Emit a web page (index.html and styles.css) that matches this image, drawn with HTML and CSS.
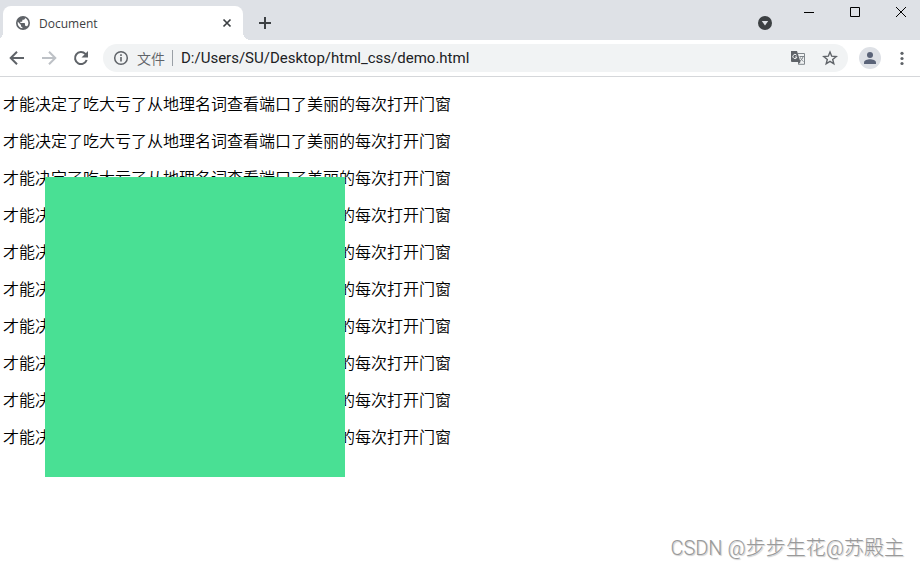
FILE: index.html
```html
<!DOCTYPE html>
<html lang="zh-CN">
<head>
  <meta charset="UTF-8" />
  <title>Document</title>
  <link rel="stylesheet" href="styles.css">
</head>
<body>

  <header class="browser">
    <div class="tab-bar">
      <div class="tab">
        <svg width="16" height="16" viewBox="0 0 24 24">
          <path d="M12 1.500a10.500 10.500 0 1 0 0 21 10.500 10.500 0 0 0 0-21zm-1 18.430c-3.950-.490-7-3.850-7-7.930 0-.620.080-1.210.210-1.790L9 15v1c0 1.100.900 2 2 2v1.930zm6.900-2.540c-.260-.810-1-1.390-1.900-1.390h-1v-3c0-.550-.450-1-1-1H8v-2h2c.550 0 1-.450 1-1V7h2c1.100 0 2-.900 2-2v-.410c2.930 1.190 5 4.060 5 7.410 0 2.080-.800 3.970-2.100 5.390z" fill="#5f6368" />
        </svg>
        <span class="tab-title">Document</span>
        <button class="icon-btn" aria-label="Close tab">
          <svg width="16" height="16" viewBox="0 0 16 16"><path d="M4.500 4.500l7 7M11.500 4.500l-7 7" stroke="#3c4043" stroke-width="1.700" /></svg>
        </button>
      </div>
      <button class="icon-btn new-tab" aria-label="New tab">
        <svg width="16" height="16" viewBox="0 0 16 16"><path d="M8 2v12M2 8h12" stroke="#3c4043" stroke-width="2" /></svg>
      </button>
      <button class="icon-btn tab-search" aria-label="Search tabs">
        <svg width="16" height="16" viewBox="0 0 16 16">
          <circle cx="8" cy="8" r="7" fill="#3c4043" />
          <path d="M4.800 6h6.400L8 10.500z" fill="#dee1e6" />
        </svg>
      </button>
      <div class="window-buttons">
        <button class="icon-btn" aria-label="Minimize">
          <svg width="12" height="12" viewBox="0 0 12 12"><path d="M1 6.500h10" stroke="#000" /></svg>
        </button>
        <button class="icon-btn" aria-label="Maximize">
          <svg width="12" height="12" viewBox="0 0 12 12"><path d="M1.500 1.500h9v9h-9z" fill="none" stroke="#000" /></svg>
        </button>
        <button class="icon-btn" aria-label="Close">
          <svg width="12" height="12" viewBox="0 0 12 12"><path d="M1 1l10 10M11 1L1 11" stroke="#000" /></svg>
        </button>
      </div>
    </div>

    <div class="toolbar">
      <button class="icon-btn" aria-label="Back">
        <svg width="16" height="16" viewBox="0 0 16 16"><path d="M15 8H2M8 1.700L1.700 8 8 14.300" fill="none" stroke="#5f6368" stroke-width="2" /></svg>
      </button>
      <button class="icon-btn" aria-label="Forward">
        <svg width="16" height="16" viewBox="0 0 16 16"><path d="M1 8h13M8 1.700L14.300 8 8 14.300" fill="none" stroke="#bdc1c6" stroke-width="2" /></svg>
      </button>
      <button class="icon-btn" aria-label="Reload">
        <svg width="16" height="16" viewBox="0 0 16 16">
          <path d="M13.700 10A6 6 0 1 1 12.400 3.900L13.500 5" fill="none" stroke="#5f6368" stroke-width="2" />
          <path d="M15 1v6.500H8.500z" fill="#5f6368" />
        </svg>
      </button>

      <div class="address-bar">
        <svg width="16" height="16" viewBox="0 0 16 16">
          <circle cx="8" cy="8" r="6.300" fill="none" stroke="#5f6368" stroke-width="1.500" />
          <path d="M8 7v4.500M8 4.300v1.600" stroke="#5f6368" stroke-width="1.600" />
        </svg>
        <label class="scheme" for="url">文件</label>
        <input type="text" id="url" value="D:/Users/SU/Desktop/html_css/demo.html" />
        <button class="icon-btn" aria-label="Translate">
          <svg width="16" height="16" viewBox="0 0 16 16">
            <path d="M7.500 3.500h7v10.800H8.300" fill="none" stroke="#80868b" />
            <path d="M1 1h6l3.500 11H2a1 1 0 0 1-1-1z" fill="#5f6368" />
            <path d="M6.600 5.200A2.100 2.100 0 1 0 7 7H5" fill="none" stroke="#f1f3f4" />
            <path d="M8 12l.300 2.500 2.200-2.500z" fill="#5f6368" />
            <path d="M9.500 6.500H14M13 6.500c-.300 2-1.500 3.500-3 4.500M10.500 7.500c.500 1.700 1.500 3 3 4" fill="none" stroke="#80868b" />
          </svg>
        </button>
        <button class="icon-btn" aria-label="Bookmark">
          <svg width="16" height="16" viewBox="0 0 16 16"><path d="M8 2l1.700 4.200 4.500.300-3.500 2.900 1.100 4.400L8 11.400l-3.800 2.400 1.100-4.400-3.500-2.900 4.500-.300z" fill="none" stroke="#5f6368" stroke-width="1.400" /></svg>
        </button>
      </div>

      <button class="icon-btn avatar" aria-label="Profile">
        <svg width="16" height="16" viewBox="0 0 16 16">
          <circle cx="8" cy="5" r="3" fill="#5a6378" />
          <path d="M2 14v-1.600C2 10.200 5.500 9.200 8 9.200s6 1 6 3.200V14z" fill="#5a6378" />
        </svg>
      </button>
      <button class="icon-btn menu" aria-label="Menu">
        <svg width="16" height="16" viewBox="0 0 16 16" fill="#5f6368"><circle cx="8" cy="3.300" r="1.600" /><circle cx="8" cy="8.500" r="1.600" /><circle cx="8" cy="13.500" r="1.600" /></svg>
      </button>
    </div>
  </header>

  <main class="page">
    <div class="box"></div>
    <p>才能决定了吃大亏了从地理名词查看端口了美丽的每次打开门窗</p>
    <p>才能决定了吃大亏了从地理名词查看端口了美丽的每次打开门窗</p>
    <p>才能决定了吃大亏了从地理名词查看端口了美丽的每次打开门窗</p>
    <p>才能决定了吃大亏了从地理名词查看端口了美丽的每次打开门窗</p>
    <p>才能决定了吃大亏了从地理名词查看端口了美丽的每次打开门窗</p>
    <p>才能决定了吃大亏了从地理名词查看端口了美丽的每次打开门窗</p>
    <p>才能决定了吃大亏了从地理名词查看端口了美丽的每次打开门窗</p>
    <p>才能决定了吃大亏了从地理名词查看端口了美丽的每次打开门窗</p>
    <p>才能决定了吃大亏了从地理名词查看端口了美丽的每次打开门窗</p>
    <p>才能决定了吃大亏了从地理名词查看端口了美丽的每次打开门窗</p>
    <div class="watermark">CSDN @步步生花@苏殿主</div>
  </main>

</body>
</html>
```

FILE: styles.css
```css
body {
  margin: 0;
  min-height: 100vh;
  display: flex;
  flex-direction: column;
  background: #fff;
  font-family: "Open Sans", "Noto Sans CJK SC", sans-serif;
}

svg {
  display: block;
  flex: none;
}

.icon-btn {
  flex: none;
  padding: 0;
  border: none;
  background: none;
  cursor: pointer;
}

.tab-bar {
  display: flex;
  align-items: flex-end;
  height: 40px;
  padding-left: 3px;
  background: #dee1e6;
  overflow: hidden;
}

.tab {
  position: relative;
  display: flex;
  align-items: center;
  gap: 8px;
  box-sizing: border-box;
  width: 240px;
  height: 34px;
  padding: 0 8px 0 12px;
  border-radius: 8px 8px 0 0;
  background: #fff;
}

/* curved feet of the active tab */
.tab::before,
.tab::after {
  content: "";
  position: absolute;
  bottom: 0;
  width: 8px;
  height: 8px;
}

.tab::before {
  left: -8px;
  background: radial-gradient(circle at 0 0, transparent 8px, #fff 8px);
}

.tab::after {
  right: -8px;
  background: radial-gradient(circle at 100% 0, transparent 8px, #fff 8px);
}

.tab-title {
  flex: 1;
  color: #3c4043;
  font-size: 12px;
}

.new-tab {
  margin: 0 0 9px 14px;
}

.tab-search {
  margin: 0 30px 9px auto;
}

.window-buttons {
  display: flex;
  align-self: flex-start;
  gap: 34px;
  padding: 6px 13px 0 0;
}

.toolbar {
  display: flex;
  align-items: center;
  gap: 16px;
  height: 36px;
  padding: 0 10px 0 9px;
  border-bottom: 1px solid #d5d7da;
}

.address-bar {
  flex: 1;
  display: flex;
  align-items: center;
  gap: 8px;
  height: 28px;
  margin: 0 -5px 0 -2px;
  padding: 0 10px;
  border-radius: 14px;
  background: #f1f3f4;
}

.scheme {
  padding-right: 7px;
  border-right: 1px solid #9aa0a6;
  color: #5f6368;
  font-family: "Noto Sans CJK SC", sans-serif;
  font-size: 14px;
  font-weight: 350;
  line-height: 16px;
}

.address-bar input {
  flex: 1;
  min-width: 0;
  padding: 0;
  border: none;
  outline: none;
  background: none;
  color: #202124;
  font-family: Roboto, sans-serif;
  font-size: 15px;
}

.address-bar .icon-btn {
  margin-left: 8px;
}

.avatar {
  padding: 3px;
  border-radius: 50%;
  background: #dee1e6;
}

.menu {
  margin-left: -3px;
}

.page {
  position: relative;
  display: flow-root;
  flex: 1;
  padding: 0 3px;
}

.page p {
  margin: 16px 0;
  color: #000;
  font-family: "Noto Sans CJK SC", sans-serif;
  font-size: 16px;
  font-weight: 350;
  line-height: 21px;
}

.box {
  position: absolute;
  top: 100px;
  left: 45px;
  width: 300px;
  height: 300px;
  background: #49e094;
}

.watermark {
  position: absolute;
  right: 16px;
  bottom: 8px;
  color: #999;
  font-family: Roboto, "Noto Sans CJK SC", sans-serif;
  font-size: 20px;
  font-weight: 300;
  line-height: 24px;
  text-shadow: 1px 1px 1px #ccc;
}
```
